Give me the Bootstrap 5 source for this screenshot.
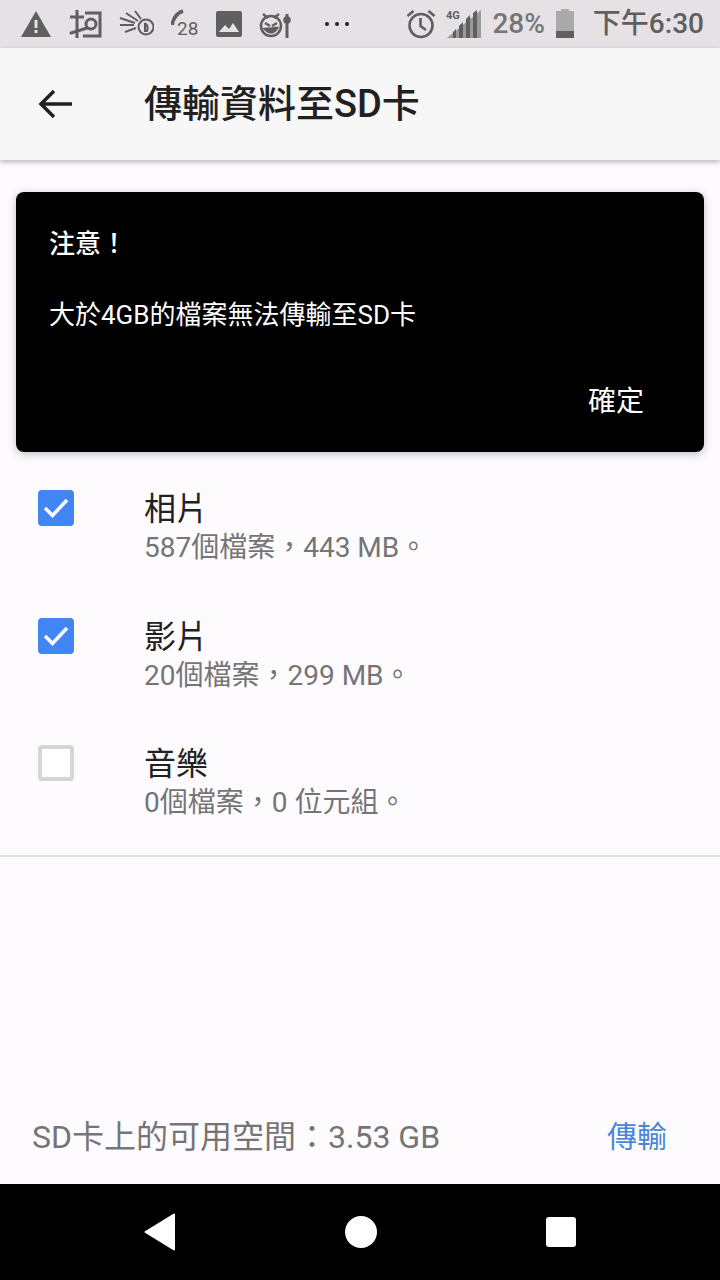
<!DOCTYPE html>
<html lang="zh-Hant">
<head>
    <meta charset="UTF-8">
    <meta name="viewport" content="width=device-width, initial-scale=1.0">
    <title>傳輸資料至SD卡</title>
    <link href="https://cdn.jsdelivr.net/npm/bootstrap@5.3.0/dist/css/bootstrap.min.css" rel="stylesheet">
    <style>
        html, body { height: 1280px; overflow: hidden; }
        body { font-family: Roboto, "Noto Sans CJK TC", sans-serif; background: #fefbff; }
        .phone { width: 720px; height: 1280px; }
        .status-bar { height: 48px; background: #e5e1e5; color: #5f5f5f; padding: 0 16px 0 20px; }
        .status-icons { gap: 17px; }
        .status-right { gap: 10px; margin-left: auto; }
        .status-pct { font-size: 28px; color: #757575; font-weight: 500; line-height: 1; }
        .status-time { font-size: 28px; color: #5f5f5f; font-weight: 500; line-height: 1; }
        .app-bar { height: 112px; background: #f7f7f7; box-shadow: 0 2px 5px rgba(0,0,0,.28); position: relative; }
        .back-btn { width: 144px; padding-left: 38px; }
        .app-title { font-size: 38px; font-weight: 500; color: #212121; }
        .main-area { height: 1024px; }
        .notice { margin: 32px 16px 0; height: 260px; background: #000; color: #fff; border-radius: 8px; padding: 33px; border: 0; box-shadow: 0 2px 8px rgba(0,0,0,.25); }
        .notice-title { font-size: 26px; font-weight: 500; line-height: 38px; }
        .notice-text { font-size: 26px; line-height: 38px; margin-top: 33px; }
        .notice-ok { font-size: 28px; line-height: 40px; margin-top: 48px; text-align: right; padding-right: 27px; }
        .file-list { padding-top: 20px; border-bottom: 2px solid #e0e0e0; height: 405px; }
        .file-row { height: 129.5px; padding-left: 38px; padding-top: 18px; background: transparent; border: 0; }
        .tick { width: 36px; height: 36px; border-radius: 4px; margin-right: 70px; flex: none; }
        .tick-on { background: #4285f4; }
        .tick-off { border: 4px solid #d6d6d6; background: #fff; }
        .file-name { font-size: 32px; line-height: 38px; color: #212121; }
        .file-info { font-size: 28px; line-height: 40px; color: #757575; }
        .foot-row { height: 327px; padding: 0 53px 27px 32px; }
        .free-space { font-size: 32px; color: #757575; line-height: 40px; }
        .send-link { font-size: 30px; color: #4a86d8; line-height: 40px; text-decoration: none; }
        .nav-keys { height: 96px; background: #000; padding: 0 144px; }
    </style>
</head>
<body>
    <div class="phone d-flex flex-column">
        <div class="status-bar d-flex align-items-center">
            <div class="status-icons d-flex align-items-center">
                <svg width="32" height="28" viewBox="0 0 32 28"><path d="M16 1 31 27H1Z" fill="#5f5f5f"/><rect x="14.5" y="10" width="3" height="8" fill="#e5e1e5"/><rect x="14.5" y="20" width="3" height="3" fill="#e5e1e5"/></svg>
                <svg width="33" height="30" viewBox="0 0 33 30" fill="none" stroke="#5f5f5f" stroke-width="3"><path d="M8 1V29M1 8H15"/><path d="M16 4H31V27H14"/><circle cx="22" cy="15" r="5"/><path d="M18 19 2 24" stroke-linecap="round"/></svg>
                <svg width="35" height="28" viewBox="0 0 35 28" fill="none" stroke="#5f5f5f" stroke-width="2"><path d="M1 8 16 13M7 3 19 11M16 1 22 9M1 15H15M6 22 17 18"/><circle cx="27" cy="17" r="7.5"/><path d="M26 13V21H28Q30 17 26 13"/></svg>
                <div class="d-flex align-items-center" style="width:28px;height:30px">
                    <svg width="28" height="30" viewBox="0 0 28 30"><path d="M1 16Q3 5 12 2" fill="none" stroke="#5f5f5f" stroke-width="3.5"/><text x="6" y="26" font-size="19" fill="#5f5f5f" font-family="Roboto">28</text></svg>
                </div>
                <svg width="26" height="26" viewBox="0 0 26 26"><rect width="26" height="26" rx="2" fill="#5f5f5f"/><path d="M3 21 9 14 13 18 17 12 23 21Z" fill="#e5e1e5"/></svg>
                <svg width="32" height="32" viewBox="0 0 32 32" fill="none" stroke="#5f5f5f" stroke-width="2.5"><circle cx="12" cy="18" r="10"/><path d="M4 6 9 10M20 6 15 10M6 15 11 18M18 15 13 18"/><path d="M6 21Q13 28 18 20Z" fill="#5f5f5f"/><path d="M28 6V30" stroke-width="3"/><circle cx="28" cy="12" r="2.5" fill="#5f5f5f"/></svg>
                <svg class="ms-3" width="26" height="6" viewBox="0 0 26 6" fill="#222"><circle cx="3" cy="3" r="2"/><circle cx="13" cy="3" r="2"/><circle cx="23" cy="3" r="2"/></svg>
            </div>
            <div class="status-right d-flex align-items-center">
                <svg width="30" height="30" viewBox="0 0 30 30" fill="none" stroke="#5f5f5f" stroke-width="2.6"><circle cx="15" cy="16.500" r="11.500"/><path d="M14.500 9V17L20 21"/><path d="M1.500 7 7.500 2M28.500 7 22.500 2"/></svg>
                <svg width="36" height="30" viewBox="0 0 36 30"><text x="0" y="10" font-size="11" font-weight="700" fill="#5f5f5f" font-family="Roboto">4G</text><path d="M35 1V29H1Z" fill="#9a9a9a"/><path d="M7 29V23L10 20V29ZM13 29V17L17 13V29ZM20 29V10L24 6V29ZM27 29V4L31 1V29Z" fill="#5f5f5f"/></svg>
                <span class="status-pct">28%</span>
                <svg width="20" height="30" viewBox="0 0 20 30"><path d="M6 0H14V2H19V29H1V2H6Z" fill="#aaa"/><rect x="1" y="22" width="18" height="7" fill="#5f5f5f"/></svg>
                <span class="status-time ms-2">下午6:30</span>
            </div>
        </div>
        <div class="app-bar d-flex align-items-center">
            <div class="back-btn">
                <svg class="d-block" width="36" height="32" viewBox="0 0 36 32" fill="none" stroke="#212121" stroke-width="3.500"><path d="M34 16H3M16 3 3 16 16 29"/></svg>
            </div>
            <div class="app-title">傳輸資料至SD卡</div>
        </div>
        <div class="main-area">
            <div class="notice card">
                <div class="notice-title">注意！</div>
                <div class="notice-text">大於4GB的檔案無法傳輸至SD卡</div>
                <div class="notice-ok">確定</div>
            </div>
            <div class="file-list list-group list-group-flush">
                <div class="file-row list-group-item d-flex align-items-start">
                    <div class="tick tick-on d-flex align-items-center justify-content-center">
                        <svg width="26" height="22" viewBox="0 0 26 22" fill="none" stroke="#fff" stroke-width="3.500"><path d="M2 11 9.500 18.500 24 3"/></svg>
                    </div>
                    <div><div class="file-name">相片</div><div class="file-info">587個檔案，443 MB。</div></div>
                </div>
                <div class="file-row list-group-item d-flex align-items-start">
                    <div class="tick tick-on d-flex align-items-center justify-content-center">
                        <svg width="26" height="22" viewBox="0 0 26 22" fill="none" stroke="#fff" stroke-width="3.500"><path d="M2 11 9.500 18.500 24 3"/></svg>
                    </div>
                    <div><div class="file-name">影片</div><div class="file-info">20個檔案，299 MB。</div></div>
                </div>
                <div class="file-row list-group-item d-flex align-items-start">
                    <div class="tick tick-off"></div>
                    <div><div class="file-name">音樂</div><div class="file-info">0個檔案，0 位元組。</div></div>
                </div>
            </div>
            <div class="foot-row d-flex align-items-end justify-content-between">
                <span class="free-space">SD卡上的可用空間：3.53 GB</span>
                <a class="send-link" href="#">傳輸</a>
            </div>
        </div>
        <div class="nav-keys d-flex align-items-center justify-content-between">
            <svg width="32" height="38" viewBox="0 0 32 38"><path d="M30 1.500V36.500L1.500 19Z" fill="#fff" stroke="#fff" stroke-width="2" stroke-linejoin="round"/></svg>
            <svg width="32" height="32" viewBox="0 0 32 32"><circle cx="16" cy="16" r="16" fill="#fff"/></svg>
            <svg width="30" height="30" viewBox="0 0 30 30"><rect width="30" height="30" rx="3" fill="#fff"/></svg>
        </div>
    </div>
    <script src="https://cdn.jsdelivr.net/npm/bootstrap@5.3.0/dist/js/bootstrap.bundle.min.js"></script>
</body>
</html>
